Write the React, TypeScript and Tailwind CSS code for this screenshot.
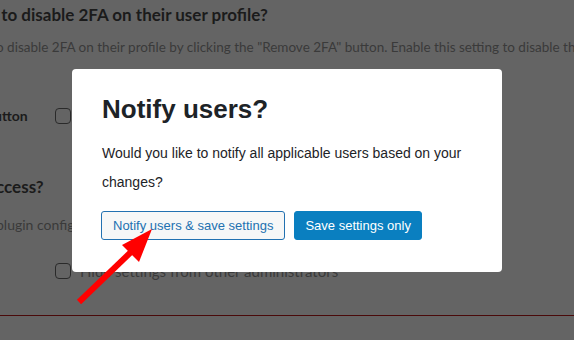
import React from "react"

const Checkbox = () => (
    <span className="inline-block w-4 h-4 rounded-[4px] border border-[#2a2a2a] shrink-0" />
)

const App = () => {
    return (
        <div className="relative w-[574px] h-[340px] overflow-hidden bg-[#646464] font-['Lato',sans-serif]">
            {/* page behind the overlay */}
            <div className="flex flex-col">
                <p className="ml-[-12px] mt-[3px] text-[17px] font-bold leading-[24px] text-[#1b1b1b] whitespace-nowrap">e to disable 2FA on their user profile?</p>
                <p className="ml-[-4px] mt-[10px] text-[13.5px] leading-[20px] text-[#3a3a3a] whitespace-nowrap">o disable 2FA on their profile by clicking the "Remove 2FA" button. Enable this setting to disable the</p>
                <div className="flex items-center mt-[48px]">
                    <span className="ml-[-6px] w-[61px] text-[14px] font-bold text-[#1b1b1b]">utton</span>
                    <Checkbox />
                </div>
                <p className="ml-[-4px] mt-[49px] text-[17px] font-bold leading-[24px] text-[#1b1b1b] whitespace-nowrap">ccess?</p>
                <p className="ml-[-4px] mt-[16px] text-[14px] leading-[20px] text-[#3a3a3a] whitespace-nowrap">plugin configuration</p>
                <div className="flex items-center gap-[9px] ml-[55px] mt-[25px]">
                    <Checkbox />
                    <span className="text-[15px] text-[#3a3a3a]">Hide settings from other administrators</span>
                </div>
                <div className="mt-[32px] h-px bg-[#4a0a0a]" />
            </div>

            {/* modal */}
            <div className="absolute left-[72px] top-[69px] w-[430px] h-[203px] rounded-[4px] bg-white pl-[30px] pr-[30px] pt-[24px] font-['Liberation_Sans',Arial,sans-serif]">
                <h2 className="text-[26px] font-bold leading-[32px] text-[#1d2327]">Notify users?</h2>
                <p className="mt-[14px] text-[14px] leading-[29px] text-[#1d2327]">Would you like to notify all applicable users based on your changes?</p>
                <div className="flex gap-[9px] mt-[14px] -ml-px">
                    <button className="h-[29px] px-[11px] rounded-[3px] border border-[#2271b1] bg-[#f6f7f7] text-[13px] text-[#2271b1]">Notify users &amp; save settings</button>
                    <button className="h-[29px] px-[10px] rounded-[3px] border border-[#0a7fc0] bg-[#0a7fc0] text-[13px] text-white">Save settings only</button>
                </div>
            </div>

            {/* annotation arrow */}
            <svg className="absolute left-0 top-0" width="574" height="340" viewBox="0 0 574 340">
                <line x1="79" y1="302" x2="131" y2="252" stroke="#ff0000" strokeWidth="6" />
                <polygon points="152,229 122,245 139,262" fill="#ff0000" />
            </svg>
        </div>
    )
}

export default App
